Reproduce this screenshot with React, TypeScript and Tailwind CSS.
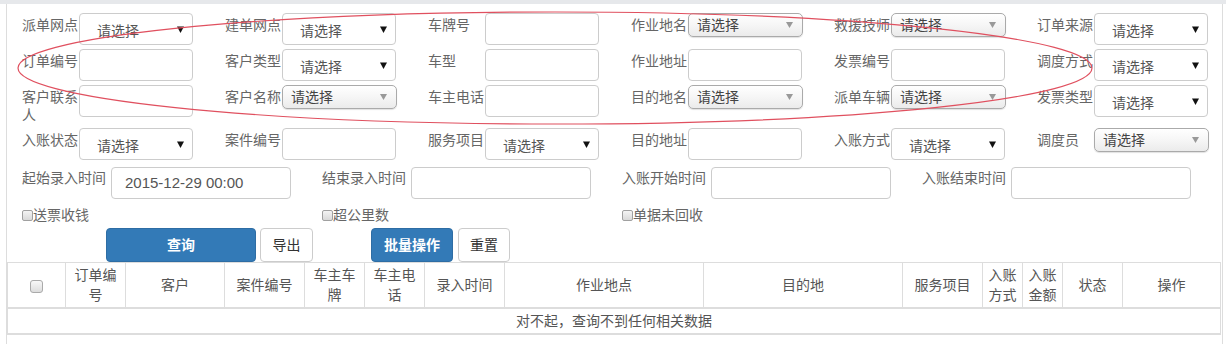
import React from "react";

type Field = { label: string; kind: "select" | "chosen" | "input" };

const rows: Field[][] = [
  [
    { label: "派单网点", kind: "select" },
    { label: "建单网点", kind: "select" },
    { label: "车牌号", kind: "input" },
    { label: "作业地名", kind: "chosen" },
    { label: "救援技师", kind: "chosen" },
    { label: "订单来源", kind: "select" },
  ],
  [
    { label: "订单编号", kind: "input" },
    { label: "客户类型", kind: "select" },
    { label: "车型", kind: "input" },
    { label: "作业地址", kind: "input" },
    { label: "发票编号", kind: "input" },
    { label: "调度方式", kind: "select" },
  ],
  [
    { label: "客户联系人", kind: "input" },
    { label: "客户名称", kind: "chosen" },
    { label: "车主电话", kind: "input" },
    { label: "目的地名", kind: "chosen" },
    { label: "派单车辆", kind: "chosen" },
    { label: "发票类型", kind: "select" },
  ],
  [
    { label: "入账状态", kind: "select" },
    { label: "案件编号", kind: "input" },
    { label: "服务项目", kind: "select" },
    { label: "目的地址", kind: "input" },
    { label: "入账方式", kind: "select" },
    { label: "调度员", kind: "chosen" },
  ],
];

const dateFields = [
  { label: "起始录入时间", value: "2015-12-29 00:00" },
  { label: "结束录入时间", value: "" },
  { label: "入账开始时间", value: "" },
  { label: "入账结束时间", value: "" },
];

const checks = ["送票收钱", "超公里数", "单据未回收"];

const columns = [
  { title: "订单编号", w: 60 },
  { title: "客户", w: 99 },
  { title: "案件编号", w: 80 },
  { title: "车主车牌", w: 60 },
  { title: "车主电话", w: 60 },
  { title: "录入时间", w: 80 },
  { title: "作业地点", w: 199 },
  { title: "目的地", w: 199 },
  { title: "服务项目", w: 80 },
  { title: "入账方式", w: 40 },
  { title: "入账金额", w: 40 },
  { title: "状态", w: 60 },
  { title: "操作", w: 98 },
];

const NativeSelect = () => (
  <div className="flex h-[32px] w-[114px] items-center justify-between rounded-[4px] border border-[#ccc] bg-white pl-[17px] pr-[8px] pt-[4px] text-[14px] text-[#555]">
    <span>请选择</span>
    <svg width="7" height="7" viewBox="0 0 7 7" className="mb-[4px]">
      <path d="M0 0.5 H7 L3.5 7 Z" fill="#111" />
    </svg>
  </div>
);

const ChosenSelect = () => (
  <div className="flex h-[24px] w-[115px] items-center justify-between rounded-[5px] border border-[#aaa] bg-linear-to-b from-white via-[#f6f6f6] to-[#ebebeb] pl-[8px] pr-[9px] text-[14px] leading-[20px] text-[#444] shadow-[0_1px_1px_rgba(0,0,0,0.12)]">
    <span>请选择</span>
    <svg width="7" height="6" viewBox="0 0 7 6">
      <path d="M0 0 H7 L3.5 6 Z" fill="#999" />
    </svg>
  </div>
);

const TextInput = ({ w = 114, value = "" }: { w?: number; value?: string }) => (
  <div
    className="flex h-[32px] items-center rounded-[4px] border border-[#ccc] bg-white pl-[13px] text-[15px] text-[#555]"
    style={{ width: w }}
  >
    {value}
  </div>
);

const Check = () => (
  <span className="inline-block h-[11px] w-[11px] rounded-[2px] border border-[#a0a0a0] bg-linear-to-b from-[#f4f4f4] to-[#d9d9d9]" />
);

export default function App() {
  return (
    <div className="relative h-[344px] w-[1226px] overflow-hidden bg-white font-['Liberation_Sans','Noto_Sans_CJK_SC',sans-serif]">
      <div className="h-[4px] bg-[#e6e8eb]" />
      <div className="ml-[6px] min-h-[340px] w-[1217px] border-x border-[#ddd]">
        <div className="px-[15px] pt-[9px]">
          <div className="flex flex-col gap-[4px]">
            {rows.map((row, ri) => (
              <div key={ri} className="flex items-start">
                {row.map((f) => (
                  <div key={f.label} className="flex w-[203px] shrink-0 items-start">
                    <div className="w-[57px] shrink-0 pr-[1px] pt-[3px] text-[14px] leading-[18px] text-[#666]">
                      {f.label}
                    </div>
                    {f.kind === "select" && <NativeSelect />}
                    {f.kind === "chosen" && <ChosenSelect />}
                    {f.kind === "input" && <TextInput />}
                  </div>
                ))}
              </div>
            ))}
          </div>

          <div className="mt-[7px] flex">
            {dateFields.map((d) => (
              <div key={d.label} className="flex w-[300px] shrink-0 items-start">
                <div className="w-[89px] shrink-0 pt-[1px] text-[14px] leading-[20px] text-[#666]">{d.label}</div>
                <TextInput w={180} value={d.value} />
              </div>
            ))}
          </div>

          <div className="mt-[6px] flex h-[20px] items-center">
            {checks.map((c) => (
              <div key={c} className="flex w-[300px] shrink-0 items-center text-[14px] text-[#666]">
                <Check />
                <span>{c}</span>
              </div>
            ))}
          </div>

          <div className="mt-[3px] flex h-[34px] items-stretch">
            <button className="ml-[84px] w-[150px] rounded-[4px] border border-[#2e6da4] bg-[#337ab7] text-[14px] font-bold text-white">
              查询
            </button>
            <button className="ml-[4px] w-[53px] rounded-[4px] border border-[#ccc] bg-white text-[14px] text-[#333]">
              导出
            </button>
            <button className="ml-[58px] w-[82px] rounded-[4px] border border-[#2e6da4] bg-[#337ab7] text-[14px] font-bold text-white">
              批量操作
            </button>
            <button className="ml-[5px] w-[52px] rounded-[4px] border border-[#ccc] bg-white text-[14px] text-[#333]">
              重置
            </button>
          </div>
        </div>

        <table className="w-[1214px] table-fixed border-collapse text-[14px] leading-[20px] text-[#555]">
          <colgroup>
            <col style={{ width: 58 }} />
            {columns.map((c) => (
              <col key={c.title} style={{ width: c.w }} />
            ))}
          </colgroup>
          <thead>
            <tr className="h-[45px]">
              <th className="border border-b-2 border-[#ddd] font-normal">
                <span className="inline-block h-[13px] w-[13px] rounded-[3px] border border-[#aaa] bg-linear-to-b from-[#f8f8f8] to-[#dcdcdc] align-middle" />
              </th>
              {columns.map((c) => (
                <th key={c.title} className="border border-b-2 border-[#ddd] px-[5px] py-[2px] text-center font-normal">
                  {c.title}
                </th>
              ))}
            </tr>
          </thead>
          <tbody>
            <tr className="h-[26px]">
              <td colSpan={14} className="border border-b-2 border-[#ddd] text-center">
                对不起，查询不到任何相关数据
              </td>
            </tr>
          </tbody>
        </table>
      </div>

      <svg className="pointer-events-none absolute left-0 top-0" width="1226" height="344">
        <ellipse cx="555" cy="68" rx="537" ry="56" fill="none" stroke="#e0505f" strokeWidth="1.2" />
      </svg>
    </div>
  );
}
